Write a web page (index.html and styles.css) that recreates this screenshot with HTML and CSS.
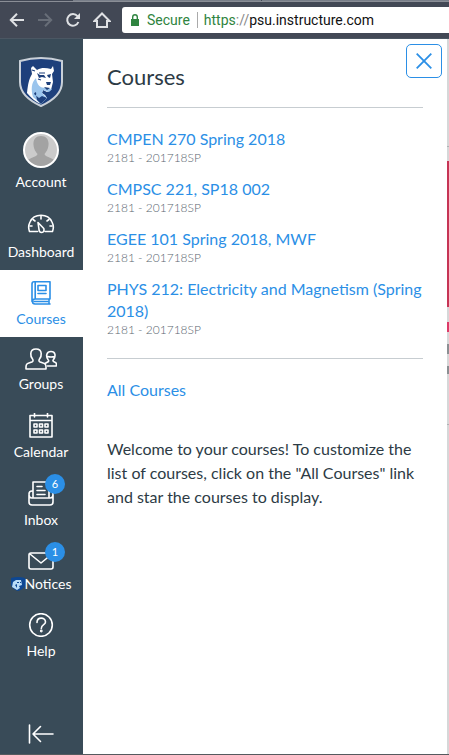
FILE: index.html
```html
<!DOCTYPE html>
<html lang="en">
<head>
<meta charset="utf-8">
<title>Courses</title>
<link rel="stylesheet" href="styles.css">
</head>
<body>
<header class="browser">
  <div class="tabs"><span class="tab-active"></span><span class="tab"></span><span class="tab"></span></div>
  <div class="toolbar">
    <button class="tool" aria-label="Back"><svg width="16" height="16" viewBox="0 0 16 16"><path d="M15 8H2M8 1.8L1.8 8L8 14.2"/></svg></button>
    <button class="tool dim" aria-label="Forward"><svg width="16" height="16" viewBox="0 0 16 16"><path d="M1 8H14M8 1.8L14.2 8L8 14.2"/></svg></button>
    <button class="tool" aria-label="Reload"><svg width="16" height="16" viewBox="0 0 16 16"><path d="M13.4 10A5.8 5.8 0 1 1 12.5 4.2"/><path class="solid" d="M15 1V7H9Z"/></svg></button>
    <button class="tool" aria-label="Home"><svg width="18" height="16" viewBox="0 0 18 16"><path d="M1.5 9L9 1.5L16.5 9H14V15H4V9Z"/></svg></button>
    <div class="address">
      <svg width="8" height="12" viewBox="0 0 8 12"><path class="lock" d="M0 5H8V12H0Z"/><path class="shackle" d="M1.7 5V3A2.3 2.3 0 0 1 6.3 3V5"/></svg>
      <span class="secure">Secure</span>
      <span class="url"><span class="scheme">https</span><span class="slashes">://</span>psu.instructure.com</span>
    </div>
  </div>
</header>
<div class="app">
  <nav class="sidebar">
    <svg class="logo" width="44" height="50" viewBox="0 0 44 50">
      <path d="M22 1C15 1 8 2 1 4V25C1 36 11 44 22 49C33 44 43 36 43 25V4C36 2 29 1 22 1Z" fill="#1e407c" stroke="#c9d0d8" stroke-width="2"/>
      <path d="M12 11L14 9L18 13C23 10 27 11 32 12L34 9L35 14L33 17L34 25L32 33L28 35L24 33L23 36L26 38L28 41L22 47C17 45 12 41 8 36C9 27 10 22 13 17Z" fill="#fff"/>
      <path d="M17 21C12 26 12 33 14 40L22 47L28 41L23 36L24 33L30 35L33 32L27 31C21 31 18 28 17 21Z" fill="#9bc5ed"/>
      <path d="M15 37C16 34 18 35 17 38L18 43L22 47L28 41L23 39L20 41Z" fill="#1e407c"/>
      <path d="M18 16L21 18L25 18L27 21L23 20L20 21ZM28 18L32 17L31 21L29 20ZM27 25L32 25L31 28L28 28ZM25 30L31 31L28 33Z" fill="#1e407c"/>
      <path d="M13 13L16 14M20 16L26 16M19 22L22 23" fill="none" stroke="#1e407c" stroke-width="1.2"/>
    </svg>
    <a class="item" href="#">
      <svg width="36" height="36" viewBox="0 0 36 36"><circle cx="18" cy="18" r="17" fill="#cbcbcb"/><path d="M18 4C12.500 4 10 8 10.500 13C11 18 13 20 14.500 22C14 25 8 25 4.500 28.500A17 17 0 0 0 31.500 28.500C28 25 22 25 21.500 22C23 20 25 18 25.500 13C26 8 23.500 4 18 4Z" fill="#a3a3a3"/><circle cx="18" cy="18" r="17" fill="none" stroke="#fff" stroke-width="2"/></svg>
      <span>Account</span>
    </a>
    <a class="item" href="#">
      <svg class="line" width="28" height="27" viewBox="0 0 28 27"><path d="M10.500 20.500H2.500C1.500 18 1.500 14 3 11C7 2 21 2 25 11C26.500 14 26.500 18 25.500 20.500H18"/><path d="M11 11.500L16.800 17.500C17.500 20 16.500 21.500 14.800 21.500C13 21.500 12 20.300 12 18.500ZM14 5V8M6 8.500L8 10M22 8.500L20 10M3 15H5M23 15H25"/></svg>
      <span>Dashboard</span>
    </a>
    <a class="item active" href="#">
      <svg class="line" width="20" height="24" viewBox="0 0 20 24"><path d="M3 .8H19V18H4A2.500 2.500 0 0 0 4 23H19M3 .8Q1 .8 1 3V20.500M4.200 1V18M18 18V23" /><path d="M7 4.500H15V9.500H7ZM7 12.500H15"/><path d="M3 20.500H17"/></svg>
      <span>Courses</span>
    </a>
    <a class="item" href="#">
      <svg class="line" width="32" height="22" viewBox="0 0 32 22"><path d="M1 21V19C1 15 3 15.500 7 14Q8.500 13.500 7.800 11.500C6 9.500 5.500 8 5.800 5.500C6 2.500 8 1 11 1S16 2.500 16.200 5.500C16.500 8 16 9.500 14.200 11.500Q13.500 13.500 15 14C19 15.500 21 15 21 19V21Z"/><path d="M20 15.500L23.500 13.500Q24 12.500 23 11.500C20.500 8 21.500 3.500 26 3.500S31 8 28.500 11.500Q27.500 12.500 28.500 13.500C31 14.500 32 15 31.200 18H22.500M22.500 8.500Q26 9.500 29.500 8.500"/></svg>
      <span>Groups</span>
    </a>
    <a class="item" href="#">
      <svg class="line" width="24" height="25" viewBox="0 0 24 25"><path d="M1 2.500H23V24H1ZM1 7.500H23M5.500 0V4M18.500 0V4M5 11H8V14H5ZM10.500 11H13.500V14H10.500ZM16 11H19V14H16ZM5 17H8V20H5ZM10.500 17H13.500V20H10.500ZM16 17H19V20H16Z"/></svg>
      <span>Calendar</span>
    </a>
    <a class="item" href="#">
      <svg class="line" width="26" height="25" viewBox="0 0 26 25"><path d="M5 16V1H21V16M1 14V21Q1 24 4 24H22Q25 24 25 21V14M5 10H4Q1 10 1 13Q1 17 4 17H22Q25 17 25 13Q25 10 22 10H21M9 5.500H14M9 9.500H17M9 13.500H17"/></svg>
      <span>Inbox</span>
      <b class="badge">6</b>
    </a>
    <a class="item" href="#">
      <svg class="line" width="26" height="21" viewBox="0 0 26 21"><rect x="1" y="4" width="24" height="16" rx="2"/><path d="M2 5L13 14L24 5"/></svg>
      <span class="notices"><svg width="14" height="14" viewBox="0 0 14 14"><path d="M0 1Q7-1 14 1V8Q13 12 7 14Q1 12 0 8Z" fill="#0d4793"/><path d="M2 5L5 3L10 3L11 8L8 9L9 11L6 13L1 10Z" fill="#b9dcf7"/><path d="M4 8L6 7L6 11ZM6 5H8V6H6ZM9 5H10V6H9Z" fill="#0d4793"/></svg>Notices</span>
      <b class="badge badge-high">1</b>
    </a>
    <a class="item" href="#">
      <svg class="line" width="26" height="24" viewBox="0 0 26 24"><circle cx="13" cy="12" r="11.300"/><path d="M9 9.500C9 3.500 17.500 4 17.500 9C17.500 12 13.300 11.500 13.300 15.500"/><circle cx="13.300" cy="18" r=".6"/></svg>
      <span>Help</span>
    </a>
    <button class="collapse" aria-label="Minimize navigation"><svg class="line" width="26" height="20" viewBox="0 0 26 20"><path d="M1.500 1V19M25 10H5M12.500 2.500L5 10L12.500 17.500"/></svg></button>
  </nav>
  <main class="tray">
    <button class="close" aria-label="Close"><svg width="16" height="16" viewBox="0 0 16 16"><path d="M.7 .7L15.300 15.300M15.300 .7L.7 15.300"/></svg></button>
    <h1>Courses</h1>
    <hr>
    <ul>
      <li><a href="#">CMPEN 270 Spring 2018</a><small>2181 - 201718SP</small></li>
      <li><a href="#">CMPSC 221, SP18 002</a><small>2181 - 201718SP</small></li>
      <li><a href="#">EGEE 101 Spring 2018, MWF</a><small>2181 - 201718SP</small></li>
      <li><a href="#">PHYS 212: Electricity and Magnetism (Spring 2018)</a><small>2181 - 201718SP</small></li>
    </ul>
    <hr>
    <a class="all" href="#">All Courses</a>
    <p>Welcome to your courses! To customize the list of courses, click on the "All Courses" link and star the courses to display.</p>
  </main>
  <aside class="behind">
    <div class="rule"></div>
    <div class="hero"></div>
    <div class="mark pink"></div>
    <div class="mark"></div>
    <div class="mark short"></div>
    <div class="rule foot"></div>
  </aside>
</div>
</body>
</html>
```

FILE: styles.css
```css
* { box-sizing: border-box; }
body {
  margin: 0;
  min-height: 100vh;
  display: flex;
  flex-direction: column;
  font: 16px/22px Lato, sans-serif;
  color: #2d3b45;
  background: #fff;
  border-bottom: 1px solid #555a5e;
}
a { color: #2b8fe6; text-decoration: none; }
button { padding: 0; border: 0; background: none; cursor: pointer; }
svg { display: block; flex: none; }

.browser { background: #424855; border-bottom: 1px solid #4b5763; }
.tabs { display: flex; gap: 1px; height: 2px; border-bottom: 1px solid #8a8e96; }
.tab-active { width: 72px; background: #424855; }
.tab { flex: 1; background: #787e89; }
.toolbar { display: flex; align-items: center; gap: 12px; height: 36px; padding-left: 9px; }
.tool { color: #dfe1e4; }
.tool path { fill: none; stroke: currentColor; stroke-width: 2; }
.tool .solid { fill: currentColor; stroke: none; }
.dim { color: #686e78; }
.address {
  flex: 1;
  display: flex;
  align-items: center;
  height: 26px;
  margin-left: -1px;
  padding-left: 9px;
  border-radius: 3px 0 0 3px;
  background: #fff;
  font: 14px/20px Roboto, sans-serif;
  color: #111;
  white-space: nowrap;
}
.lock { fill: #2f8440; }
.shackle { fill: none; stroke: #2f8440; stroke-width: 1.4; }
.secure { margin-left: 8px; padding-right: 7px; color: #2f8440; line-height: 16px; border-right: 1px solid #aaa; }
.url { margin-left: 6px; }
.scheme { color: #2f8440; }
.slashes { color: #888; }

.app { flex: 1; display: flex; }
.sidebar {
  flex: none;
  width: 83px;
  display: flex;
  flex-direction: column;
  background: #394b58;
}
.logo { margin: 18px auto 14px 19px; }
.item {
  position: relative;
  display: flex;
  flex-direction: column;
  align-items: center;
  gap: 4px;
  padding: 11px 1px 8px 0;
  color: #fff;
  font-size: 14px;
  line-height: 20px;
}
.active { background: #fff; color: #2b8fe6; }
.line { fill: none; stroke: currentColor; stroke-width: 1.6; stroke-linejoin: round; stroke-linecap: round; }
.notices { display: flex; align-items: center; }
.badge {
  position: absolute;
  top: 4px;
  left: 45px;
  width: 20px;
  height: 20px;
  border-radius: 50%;
  background: #2b8fe6;
  font-size: 11px;
  font-weight: 400;
  text-align: center;
}
.collapse { margin: auto auto 10px 28px; color: #fff; }

.tray { position: relative; flex: 1; padding: 24px; }
.close {
  position: absolute;
  top: 5px;
  right: 5px;
  width: 36px;
  height: 34px;
  display: grid;
  place-items: center;
  border: 1px solid #2b8fe6;
  border-radius: 5px;
  background: #fff;
}
.close path { stroke: #2b8fe6; stroke-width: 1.8; }
h1 { margin: 0; font-size: 22px; line-height: 28px; font-weight: 400; }
hr { margin: 20px 0; border: 0; border-top: 1px solid #c7cdd1; }
h1 + hr { margin-top: 16px; }
ul { display: grid; gap: 12px; margin: 0; padding: 0; list-style: none; }
li a, li small { display: block; }
small { font-size: 12px; line-height: 16px; font-weight: 300; color: #5b6670; }
.all { display: block; }
p { margin: 36px 0 0; line-height: 24px; }

.behind { flex: none; width: 2px; background: #d6d7d8; }
.rule { height: 1px; margin-top: 107px; background: #aeb2b5; }
.hero { height: 146px; margin: 14px 0 15px; background: #c63455; }
.mark { height: 10px; margin-bottom: 12px; background: #8b8f93; }
.pink { background: #dc3a68; }
.short { height: 8px; }
.foot { margin-top: 50px; }
```
